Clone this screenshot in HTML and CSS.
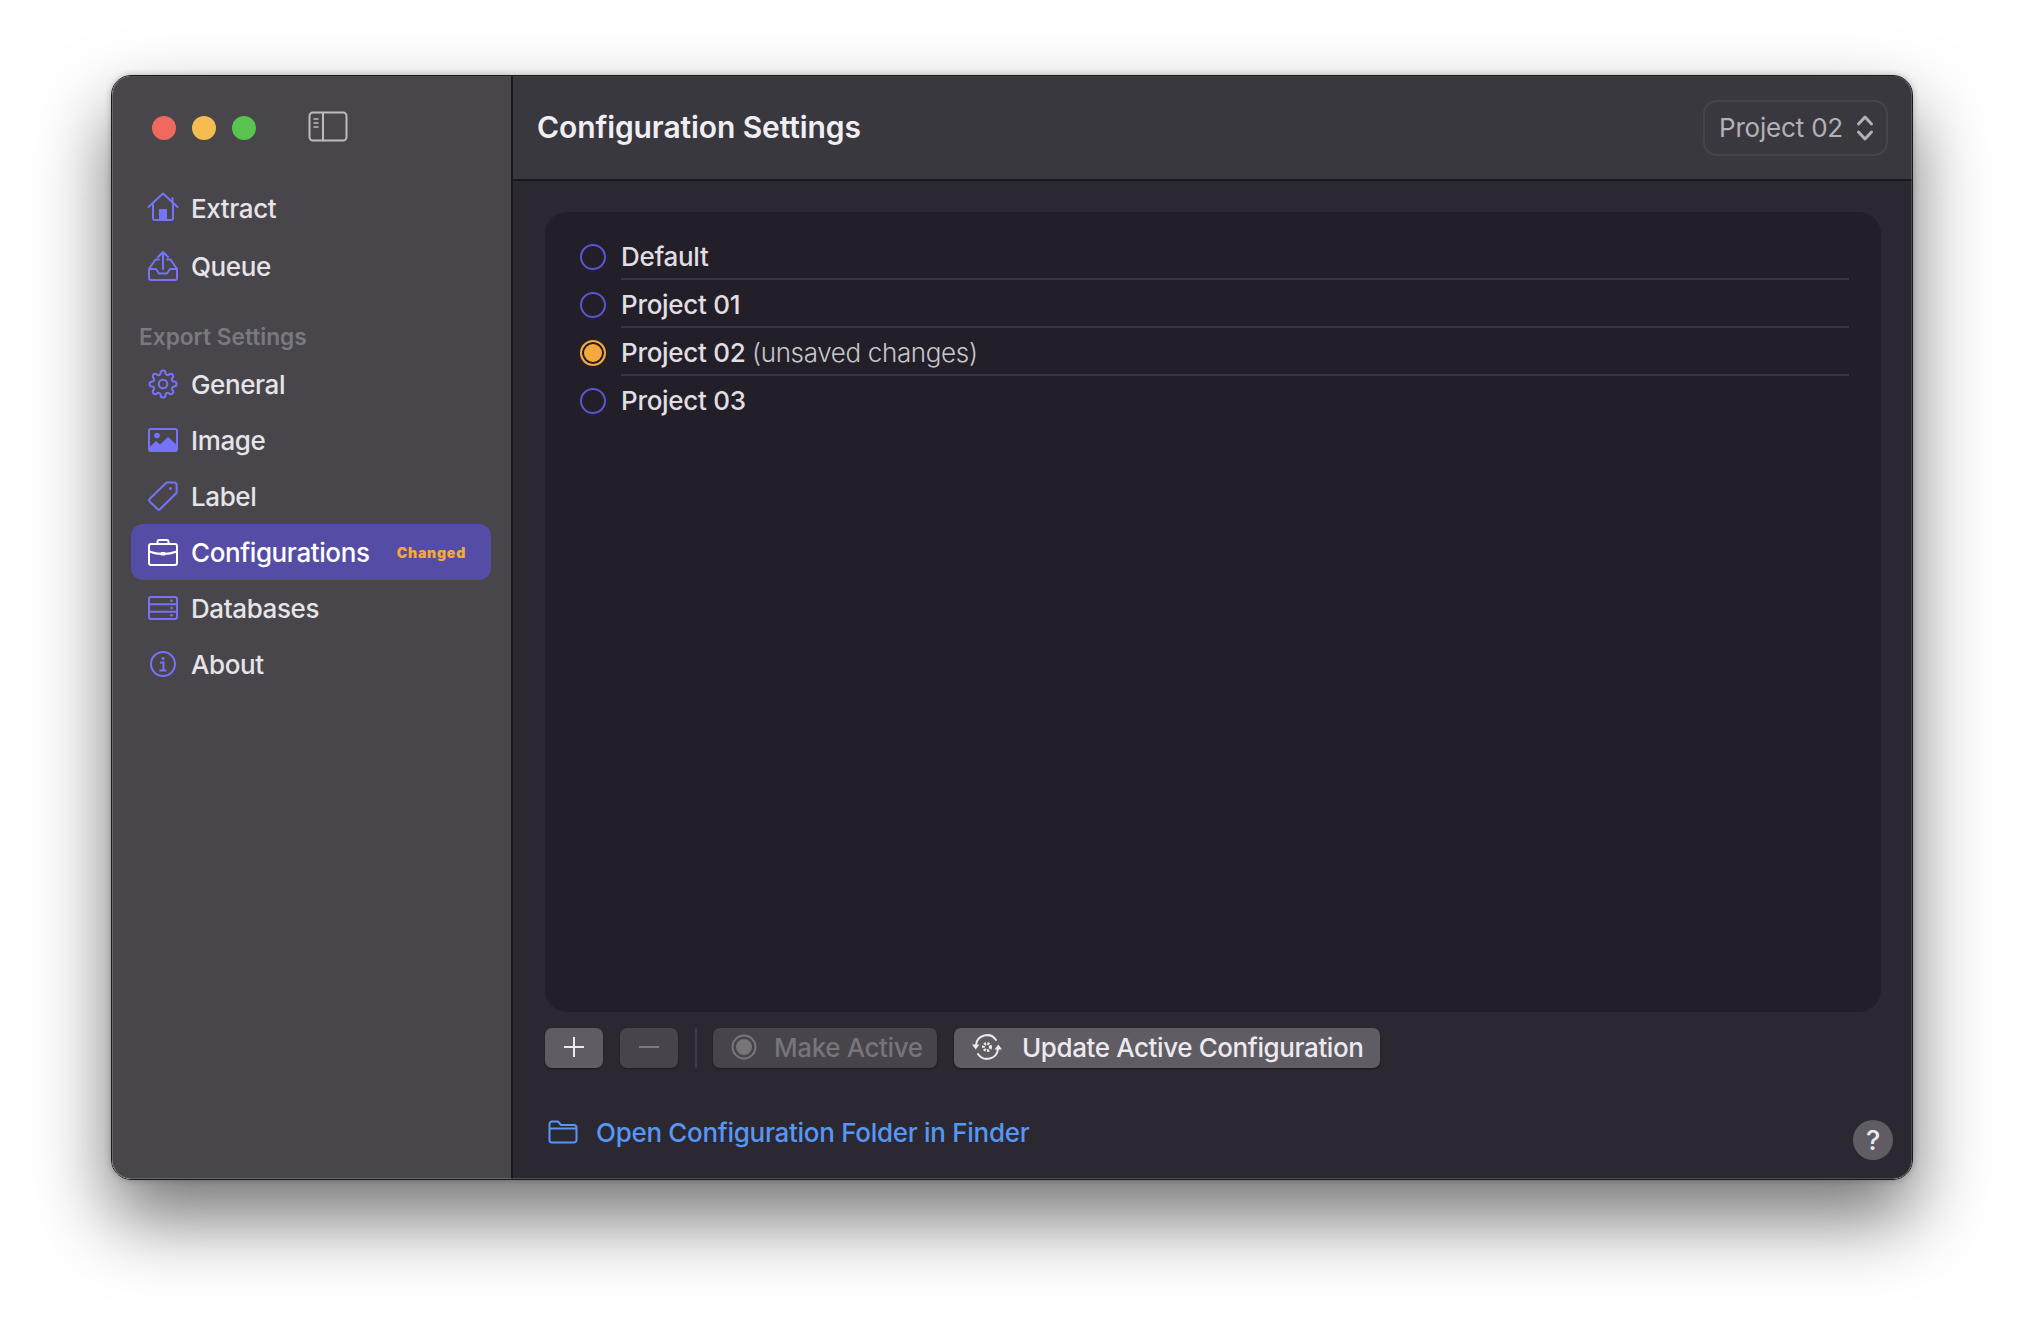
FILE: index.html
```html
<!DOCTYPE html>
<html lang="en">
  <head>
    <meta charset="UTF-8" />
    <title>Configuration Settings</title>
    <link rel="stylesheet" href="styles.css">
  </head>
  <body>
    <div class="window">
      <aside class="sidebar">
        <div class="sidebar-top">
          <span class="light red"></span>
          <span class="light yellow"></span>
          <span class="light green"></span>
          <svg class="toggle" width="40" height="31" viewBox="0 0 40 31" fill="none" stroke="#bdbbc0" stroke-width="2">
            <rect x="1.5" y="1.5" width="37" height="28" rx="3.5" />
            <path d="M15 1.5v28" />
            <path d="M5.5 8h5M5.5 12h5M5.5 16h5" stroke-width="1.5" />
          </svg>
        </div>
        <nav class="nav">
          <a class="nav-item top">
            <svg class="nav-icon" viewBox="0 0 32 32" fill="none" stroke="currentColor" stroke-width="2" stroke-linejoin="round" stroke-linecap="round">
              <path d="M1.500 15 16 1.500 30.500 15" />
              <path d="M25.500 6v4" />
              <path d="M6 12v14a2 2 0 0 0 2 2h16a2 2 0 0 0 2-2V12" />
              <rect x="12" y="17" width="8" height="11" fill="currentColor" stroke="none" />
            </svg>
            <span>Extract</span>
          </a>
          <a class="nav-item top">
            <svg class="nav-icon" viewBox="0 0 32 32" fill="none" stroke="currentColor" stroke-width="2" stroke-linejoin="round" stroke-linecap="round">
              <path d="M12 9.500H8.500L2 19v9a2 2 0 0 0 2 2h24a2 2 0 0 0 2-2v-9l-6.500-9.500H20" />
              <path d="M2 19h7l3 4.500h8l3-4.500h7" />
              <path d="M16 19V2M11 7l5-5 5 5" />
            </svg>
            <span>Queue</span>
          </a>
          <h3 class="nav-heading">Export Settings</h3>
          <a class="nav-item">
            <svg class="nav-icon" viewBox="-1 -1 26 26" fill="none" stroke="currentColor" stroke-width="1.700">
              <circle cx="12" cy="12" r="3.500" />
              <path d="M19.4 15a1.650 1.650 0 0 0 .33 1.820l.06.06a2 2 0 0 1 0 2.830 2 2 0 0 1-2.830 0l-.06-.06a1.650 1.650 0 0 0-1.820-.33 1.650 1.650 0 0 0-1 1.510V21a2 2 0 0 1-2 2 2 2 0 0 1-2-2v-.09A1.650 1.650 0 0 0 9 19.400a1.650 1.650 0 0 0-1.820.33l-.06.06a2 2 0 0 1-2.830 0 2 2 0 0 1 0-2.830l.06-.06a1.650 1.650 0 0 0 .33-1.820 1.650 1.650 0 0 0-1.510-1H3a2 2 0 0 1-2-2 2 2 0 0 1 2-2h.09A1.650 1.650 0 0 0 4.600 9a1.650 1.650 0 0 0-.33-1.820l-.06-.06a2 2 0 0 1 0-2.830 2 2 0 0 1 2.830 0l.06.06a1.650 1.650 0 0 0 1.820.33H9a1.650 1.650 0 0 0 1-1.510V3a2 2 0 0 1 2-2 2 2 0 0 1 2 2v.09a1.650 1.650 0 0 0 1 1.510 1.650 1.650 0 0 0 1.820-.33l.06-.06a2 2 0 0 1 2.830 0 2 2 0 0 1 0 2.830l-.06.06a1.650 1.650 0 0 0-.33 1.820V9a1.650 1.650 0 0 0 1.510 1H21a2 2 0 0 1 2 2 2 2 0 0 1-2 2h-.09a1.650 1.650 0 0 0-1.510 1z" />
            </svg>
            <span>General</span>
          </a>
          <a class="nav-item">
            <svg class="nav-icon" viewBox="0 0 32 32" fill="none" stroke="currentColor" stroke-width="2">
              <rect x="2" y="5" width="28" height="22" rx="2" />
              <circle cx="10" cy="11.500" r="2.800" fill="currentColor" stroke="none" />
              <path d="M2 23.500 9 17l4 3.500L21 13l9 8v6a1 1 0 0 1-1 1H3a1 1 0 0 1-1-1z" fill="currentColor" stroke="none" />
            </svg>
            <span>Image</span>
          </a>
          <a class="nav-item">
            <svg class="nav-icon" viewBox="0 0 32 32" fill="none" stroke="currentColor" stroke-width="2" stroke-linejoin="round">
              <path d="M18.500 3.500 2.800 18.800a2 2 0 0 0 0 2.800l7.600 7.400a2 2 0 0 0 2.800 0L29 13.500a2 2 0 0 0 .6-1.400V5a2.500 2.500 0 0 0-2.500-2.500H20a2 2 0 0 0-1.500 1z" />
              <circle cx="23.500" cy="8.500" r="1.500" fill="currentColor" stroke="none" />
            </svg>
            <span>Label</span>
          </a>
          <a class="nav-item active">
            <svg class="nav-icon" viewBox="0 0 32 32" fill="none" stroke="currentColor" stroke-width="2" stroke-linejoin="round">
              <rect x="2" y="8" width="28" height="21" rx="2" />
              <path d="M2 15.500c4 1.500 9 2.500 14 2.500s10-1 14-2.500" />
              <path d="M10.500 8V6a2 2 0 0 1 2-2h7a2 2 0 0 1 2 2v2" />
              <rect x="13.500" y="16" width="5" height="3.500" rx="1" fill="currentColor" stroke="none" />
            </svg>
            <span>Configurations</span>
            <span class="badge">Changed</span>
          </a>
          <a class="nav-item">
            <svg class="nav-icon" viewBox="0 0 32 32" fill="none" stroke="currentColor" stroke-width="2">
              <rect x="2" y="5" width="28" height="22" rx="2" />
              <path d="M2 12.300h28M2 19.700h28" />
              <circle cx="24.500" cy="8.700" r="1.300" fill="currentColor" stroke="none" />
              <circle cx="24.500" cy="16" r="1.300" fill="currentColor" stroke="none" />
              <circle cx="24.500" cy="23.300" r="1.300" fill="currentColor" stroke="none" />
            </svg>
            <span>Databases</span>
          </a>
          <a class="nav-item">
            <svg class="nav-icon" viewBox="0 0 32 32" fill="none" stroke="currentColor" stroke-width="2">
              <circle cx="16" cy="16" r="12" />
              <circle cx="16" cy="10.500" r="1.500" fill="currentColor" stroke="none" />
              <path d="M13 14.500h3.500V22M12.500 22.500h7" />
            </svg>
            <span>About</span>
          </a>
        </nav>
      </aside>

      <main class="main">
        <header class="titlebar">
          <h1 class="title">Configuration Settings</h1>
          <div class="popup">
            <span>Project 02</span>
            <svg width="18" height="30" viewBox="0 0 18 30" fill="none" stroke="#b3b1b6" stroke-width="3" stroke-linecap="round" stroke-linejoin="round">
              <path d="M2.500 11 9 4l6.500 7M2.500 19 9 26l6.500-7" />
            </svg>
          </div>
        </header>

        <section class="content">
          <div class="panel">
            <ul class="list">
              <li class="row"><span class="radio"></span><span class="row-label">Default</span></li>
              <li class="row"><span class="radio"></span><span class="row-label">Project 01</span></li>
              <li class="row"><span class="radio on"></span><span class="row-label">Project 02 <em>(unsaved changes)</em></span></li>
              <li class="row"><span class="radio"></span><span class="row-label">Project 03</span></li>
            </ul>
          </div>

          <div class="toolbar">
            <button class="btn square"><svg width="20" height="20" viewBox="0 0 20 20" stroke="#eceaee" stroke-width="2"><path d="M10 0v20M0 10h20" /></svg></button>
            <button class="btn square off"><svg width="20" height="20" viewBox="0 0 20 20" stroke="#7d7b81" stroke-width="2"><path d="M0 10h20" /></svg></button>
            <span class="tool-sep"></span>
            <button class="btn off make">
              <svg width="26" height="26" viewBox="0 0 26 26" fill="#77757a" stroke="#77757a" stroke-width="2"><circle cx="13" cy="13" r="11.500" fill="none" /><circle cx="13" cy="13" r="8" stroke="none" /></svg>
              <span>Make Active</span>
            </button>
            <button class="btn update">
              <svg width="32" height="28" viewBox="0 0 32 28" fill="none" stroke="#eceaee" stroke-width="2" stroke-linecap="round">
                <path d="M5 12a11 11 0 0 1 20-5" />
                <path d="M27 16a11 11 0 0 1-20 5" />
                <path d="M1 11.500h7.500L4.700 16.500zM31 16.500h-7.500L27.300 11.500z" fill="#eceaee" stroke="none" />
                <circle cx="16" cy="14" r="3.500" stroke-width="3" stroke-dasharray="2 1.300" stroke-linecap="butt" />
              </svg>
              <span>Update Active Configuration</span>
            </button>
          </div>

          <div class="footer">
            <a class="folder-link">
              <svg width="30" height="24" viewBox="0 0 30 24" fill="none" stroke="#5797f3" stroke-width="2" stroke-linejoin="round">
                <path d="M1.500 4a2.500 2.500 0 0 1 2.500-2.500h6L13 5h13a2.500 2.500 0 0 1 2.500 2.500V20a2.500 2.500 0 0 1-2.500 2.500H4A2.500 2.500 0 0 1 1.500 20z" />
                <path d="M1.500 8.500h27" />
              </svg>
              <span>Open Configuration Folder in Finder</span>
            </a>
            <button class="help">?</button>
          </div>
        </section>
      </main>
    </div>
  </body>
</html>
```

FILE: styles.css
```css
* {
  box-sizing: border-box;
}
html,
body {
  height: 100%;
}
body {
  margin: 0;
  padding: 75px 111px 148px;
  background: #fff;
  overflow: hidden;
  font-family: Inter, "Liberation Sans", sans-serif;
  color: #e4e2e6;
}
.window {
  position: relative;
  display: flex;
  height: 100%;
  border: 1px solid #19181b;
  border-radius: 20px;
  box-shadow: 0 38px 74px rgba(0, 0, 0, 0.55), 0 0 6px rgba(0, 0, 0, 0.25);
}
.window::after {
  content: "";
  position: absolute;
  inset: 0;
  border-radius: 19px;
  border: 1px solid rgba(255, 255, 255, 0.17);
  border-top-color: rgba(255, 255, 255, 0.04);
  pointer-events: none;
}

/* sidebar */
.sidebar {
  width: 401px;
  flex-shrink: 0;
  padding: 0 20px 0 19px;
  background: #48464b;
  border-right: 2px solid #19181b;
  border-radius: 19px 0 0 19px;
}
.sidebar-top {
  display: flex;
  align-items: center;
  height: 105px;
  padding: 0 0 1px 21px;
  gap: 16px;
}
.light {
  width: 24px;
  height: 24px;
  border-radius: 50%;
}
.light.red {
  background: #f0695e;
}
.light.yellow {
  background: #f5bd4f;
}
.light.green {
  background: #5ac451;
}
.toggle {
  margin: 0 0 3px 36px;
}
.nav {
  display: flex;
  flex-direction: column;
}
.nav-item {
  display: flex;
  align-items: center;
  height: 56px;
  padding: 0 16px;
  gap: 12px;
  font-size: 26px;
  font-weight: 450;
  letter-spacing: -0.4px;
  color: #e6e4e8;
  border-radius: 12px;
}
.nav-item.top {
  padding-bottom: 2px;
}
.nav-item .nav-icon {
  width: 32px;
  height: 32px;
  flex-shrink: 0;
  color: #7672fa;
}
.nav-item.active {
  background: #554da5;
  color: #fff;
}
.nav-item.active .nav-icon {
  color: #fff;
}
.badge {
  margin-left: auto;
  margin-right: 9px;
  font-size: 14px;
  font-weight: 900;
  letter-spacing: 0.8px;
  color: #f5a93c;
}
.nav-item:nth-child(2) {
  margin-top: 2px;
}
.nav-heading {
  margin: 28px 0 5px 8px;
  height: 28px;
  line-height: 28px;
  font-size: 22.7px;
  font-weight: 600;
  color: #7b797f;
}

/* main area */
.main {
  flex: 1;
  display: flex;
  flex-direction: column;
  min-width: 0;
  border-radius: 0 19px 19px 0;
  background: #2c2832;
}
.titlebar {
  display: flex;
  align-items: center;
  justify-content: space-between;
  height: 105px;
  padding: 0 24px;
  background: #3a383f;
  border-bottom: 2px solid #19181b;
  border-radius: 0 19px 0 0;
}
.title {
  margin: 0 0 2px;
  font-size: 30px;
  font-weight: 600;
  letter-spacing: -0.1px;
  color: #f0eef2;
}
.popup {
  display: flex;
  align-items: center;
  gap: 13px;
  height: 56px;
  padding: 0 12px 0 14px;
  border: 2px solid #47454c;
  border-radius: 14px;
  font-size: 26px;
  letter-spacing: -0.2px;
  color: #b3b1b6;
}
.content {
  flex: 1;
  display: flex;
  flex-direction: column;
  padding: 31px 31px 0 32px;
  min-height: 0;
}
.panel {
  height: 800px;
  padding: 21px 32px 0 35px;
  background: #231f29;
  border-radius: 22px;
}
.list {
  margin: 0;
  padding: 0;
  list-style: none;
}
.row {
  display: flex;
  align-items: center;
  height: 48px;
  gap: 15px;
}
.radio {
  width: 26px;
  height: 26px;
  flex-shrink: 0;
  border: 2px solid #5a55d2;
  border-radius: 50%;
}
.radio.on {
  border-color: #f5a93c;
  background: #f5a93c;
  box-shadow: inset 0 0 0 2px #231f29;
}
.row-label {
  flex: 1;
  height: 46px;
  line-height: 46px;
  font-size: 26px;
  font-weight: 450;
  letter-spacing: -0.3px;
  color: #e0dee2;
  border-bottom: 2px solid #3a3740;
}
.row:last-child .row-label {
  border-bottom: none;
}
.row-label em {
  font-style: normal;
  font-weight: 300;
  letter-spacing: -0.35px;
  color: #c8c6cb;
}

/* buttons */
.toolbar {
  display: flex;
  align-items: center;
  gap: 17px;
  margin-top: 16px;
}
.btn {
  display: flex;
  align-items: center;
  justify-content: center;
  height: 40px;
  padding: 0 0 2px;
  border: none;
  border-radius: 7px;
  background: #5f5c64;
  box-shadow: 0 1px 2px rgba(0, 0, 0, 0.4);
  font-family: inherit;
  font-size: 26px;
  font-weight: 450;
  letter-spacing: -0.4px;
  color: #eceaee;
}
.btn.square {
  width: 58px;
}
.btn.off {
  background: #47444c;
  color: #77757a;
}
.tool-sep {
  width: 2px;
  height: 40px;
  background: #3f3c45;
}
.btn.make {
  width: 224px;
  justify-content: flex-start;
  gap: 17px;
  padding-left: 18px;
  margin-left: -1px;
}
.btn.update {
  width: 426px;
  justify-content: flex-start;
  gap: 19px;
  padding-left: 17px;
}
.footer {
  display: flex;
  align-items: center;
  justify-content: space-between;
  margin-top: 41px;
  height: 46px;
  padding: 0 0 0 3px;
}
.folder-link {
  display: flex;
  align-items: center;
  gap: 18px;
  font-size: 26px;
  font-weight: 450;
  letter-spacing: -0.3px;
  color: #5797f3;
}
.help {
  position: absolute;
  right: 19px;
  bottom: 19px;
  width: 40px;
  height: 40px;
  padding: 0;
  border: none;
  border-radius: 50%;
  background: #5f5c64;
  font-family: inherit;
  font-size: 27px;
  font-weight: 500;
  color: #ebe9ed;
}
```
